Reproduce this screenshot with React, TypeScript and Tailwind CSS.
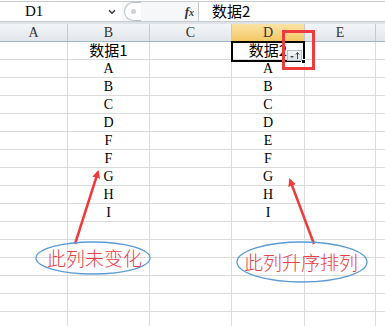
import { ChevronDown } from 'lucide-react'

const cols = [
  { key: 'A', w: 68 },
  { key: 'B', w: 82 },
  { key: 'C', w: 82 },
  { key: 'D', w: 73 },
  { key: 'E', w: 71 },
  { key: '', w: 40 },
]

const colB = ['数据1', 'A', 'B', 'C', 'D', 'F', 'F', 'G', 'H', 'I']
const colD = ['数据2', 'A', 'B', 'C', 'D', 'E', 'F', 'G', 'H', 'I']

const cellFont = { fontFamily: '"Liberation Serif", "Noto Sans CJK SC", serif' }
const cjkFont = { fontFamily: '"Noto Sans CJK SC", sans-serif' }

function FormulaBar() {
  return (
    <div className="flex h-[21px] border-t border-b border-[#c6cbd2] bg-white mt-[1px]">
      <div className="flex w-[122px] items-center pl-[25px] pr-[5px] text-[15px] text-black" style={cellFont}>
        <span className="flex-1">D1</span>
        <ChevronDown size={10} strokeWidth={4} className="text-[#444]" />
      </div>
      <div className="flex w-[77px] items-center border-r border-[#c6cbd2] bg-[#f6f7f9]">
        <div className="ml-[2px] flex h-[19px] w-[17px] items-center justify-center rounded-l-full border border-r-0 border-[#b9c0c9] bg-white">
          <div className="h-[5px] w-[5px] rounded-full bg-[#cdd2d8]" />
        </div>
        <span className="ml-auto mr-[4px] text-[13px] italic font-bold text-[#333]" style={{ fontFamily: '"Liberation Serif", serif' }}>
          f<span className="text-[10px]">x</span>
        </span>
      </div>
      <div className="flex items-center pl-[13px] text-[15px] text-black" style={cjkFont}>
        数据2
      </div>
    </div>
  )
}

function Header() {
  return (
    <div className="flex h-[18px] border-b border-[#9eb6ce] bg-gradient-to-b from-[#f3f5f8] to-[#e2e6eb]">
      {cols.map((c, idx) => (
        <div
          key={idx}
          style={{ width: c.w, ...cellFont }}
          className={
            c.key === 'D'
              ? 'shrink-0 flex items-center justify-center border-r border-[#c5c9cf] bg-gradient-to-b from-[#fbe3a5] to-[#f4c862] text-[14px] text-[#333]'
              : 'shrink-0 flex items-center justify-center border-r border-[#c5c9cf] text-[14px] text-[#333]'
          }
        >
          {c.key}
        </div>
      ))}
    </div>
  )
}

function Row({ i }: { i: number }) {
  return (
    <div className="flex h-[18px] border-b border-[#d9dbdd]">
      {cols.map((c, idx) => {
        let text = ''
        if (c.key === 'B') text = colB[i] ?? ''
        if (c.key === 'D') text = colD[i] ?? ''
        return (
          <div
            key={idx}
            style={{ width: c.w, ...cellFont }}
            className="shrink-0 flex items-center justify-center border-r border-[#d9dbdd] text-[14px] text-black"
          >
            {i === 0 ? <span className="text-[15px]" style={cjkFont}>{text}</span> : text}
          </div>
        )
      })}
    </div>
  )
}

export default function App() {
  const rows = Array.from({ length: 16 }, (_, i) => i)
  return (
    <div className="relative h-[326px] w-[385px] overflow-hidden bg-white">
      <FormulaBar />
      <div className="h-[2px] bg-[#dfe3e8]" />
      <Header />
      {rows.map((i) => (
        <Row key={i} i={i} />
      ))}

      {/* active cell D1 */}
      <div className="absolute left-[231px] top-[41px] h-[21px] w-[74px] border-2 border-black" />
      <div className="absolute left-[301px] top-[59px] h-[5px] w-[5px] border border-white bg-black" />
      {/* filter button */}
      <div className="absolute left-[287px] top-[50px] flex h-[11px] w-[15px] items-center justify-center border border-[#b4bcc6] bg-gradient-to-b from-[#f4f6f8] to-[#dfe4ea]">
        <svg width="12" height="9" viewBox="0 0 12 9">
          <path d="M1 5 L5 5 L3 7 Z" fill="#444" />
          <path d="M8.5 8 L8.5 2" stroke="#444" strokeWidth="1" />
          <path d="M6.8 3.6 L8.5 1.5 L10.2 3.6" stroke="#444" strokeWidth="1" fill="none" />
        </svg>
      </div>

      <svg className="pointer-events-none absolute left-0 top-0" width="385" height="326" viewBox="0 0 385 326">
        <defs>
          <marker id="ah" markerWidth="8" markerHeight="8" refX="6" refY="4" orient="auto" markerUnits="userSpaceOnUse">
            <path d="M0 0 L8 4 L0 8 Z" fill="#ee3b3b" />
          </marker>
        </defs>
        <rect x="283.5" y="31.5" width="30" height="37" fill="none" stroke="#ee3b3b" strokeWidth="3" />
        <path d="M75 244 L98 172" stroke="#ee3b3b" strokeWidth="2.5" markerEnd="url(#ah)" />
        <path d="M314 244 L290 180" stroke="#ee3b3b" strokeWidth="2.5" markerEnd="url(#ah)" />
        <ellipse cx="93" cy="258" rx="57" ry="16" fill="none" stroke="#5b9bd5" strokeWidth="1.3" />
        <ellipse cx="302" cy="262" rx="65" ry="20" fill="none" stroke="#5b9bd5" strokeWidth="1.3" />
      </svg>

      <div className="absolute left-[47px] top-[246px] text-[19px] leading-[24px] text-[#e8414a]" style={{ ...cjkFont, fontWeight: 300 }}>
        此列未变化
      </div>
      <div className="absolute left-[244px] top-[250px] text-[19px] leading-[24px] text-[#e8414a]" style={{ ...cjkFont, fontWeight: 300 }}>
        此列升序排列
      </div>
    </div>
  )
}
